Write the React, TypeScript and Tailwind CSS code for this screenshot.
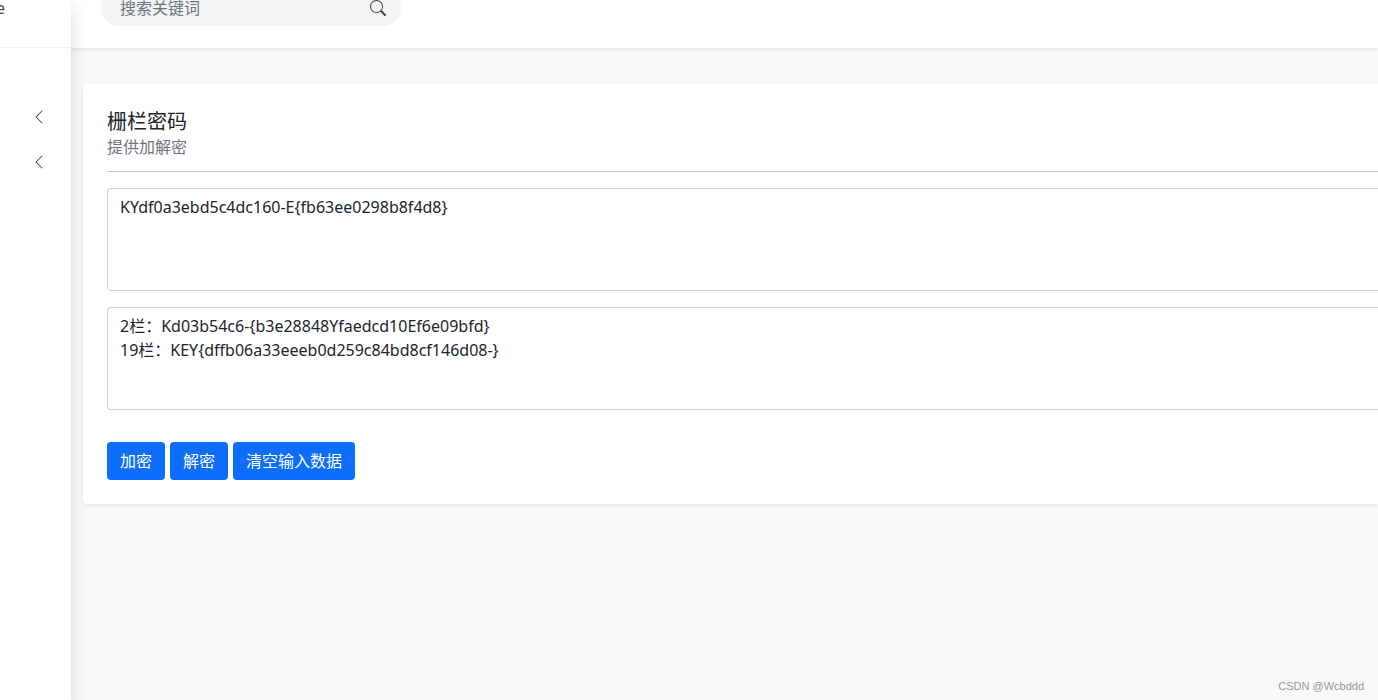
import { useState } from "react";
import { BsChevronLeft, BsSearch } from "react-icons/bs";

const menuGroups = ["menu-1", "menu-2"];

function Sidebar() {
    return (
        <aside className="relative w-[71px] shrink-0 bg-white shadow-[0_8px_16px_rgba(0,0,0,0.15)]">
            <div className="flex h-12 w-full items-start border-b border-[#f0f0f0]">
                <span className="-ml-1 -mt-1 leading-6 text-[#444444]">e</span>
            </div>
            <nav className="flex flex-col items-center pt-[46px]">
                {menuGroups.map((group) =>
                    <button key={group} type="button" aria-label={group} className="flex h-[45px] w-full items-center pl-[31px]">
                        <BsChevronLeft className="size-4 text-[#444444]" />
                    </button>
                )}
            </nav>
        </aside>
    );
}

function TopBar() {
    const [keyword, setKeyword] = useState("");

    return (
        <header className="flex h-12 items-start bg-white pl-[30px] shadow-[0_2px_4px_rgba(0,0,0,0.075)]">
            <form className="-mt-2.5 flex h-9 w-[300px] items-center rounded-full bg-[#f4f4f4] pl-[19px] pr-[15px]" onSubmit={(e) => e.preventDefault()}>
                <input
                    type="text"
                    aria-label="搜索关键词"
                    placeholder="搜索关键词"
                    value={keyword}
                    onChange={(e) => setKeyword(e.target.value)}
                    className="min-w-0 flex-1 bg-transparent text-base outline-none placeholder:text-[#6c757d]"
                />
                <button type="submit" aria-label="search">
                    <BsSearch className="size-4 text-[#444444]" />
                </button>
            </form>
        </header>
    );
}

const areaClass = "block h-[103px] w-full resize-none rounded-l border border-r-0 border-[#d0d1d3] bg-white px-3 py-1.5 text-base leading-6 outline-none";
const buttonClass = "h-[38px] rounded bg-[#0d6efd] px-[13px] text-base text-white hover:bg-[#0b5ed7]";

function FenceCipher() {
    const [source, setSource] = useState("KYdf0a3ebd5c4dc160-E{fb63ee0298b8f4d8}");
    const [result, setResult] = useState("2栏：Kd03b54c6-{b3e28848Yfaedcd10Ef6e09bfd}\n19栏：KEY{dffb06a33eeeb0d259c84bd8cf146d08-}");

    const clear = () => {
        setSource("");
        setResult("");
    };

    return (
        <section className="relative rounded-l bg-white pt-[25px] pb-6 pl-6 shadow-[0_2px_4px_rgba(0,0,0,0.075)]">
            <h1 className="text-xl leading-[26px]">栅栏密码</h1>
            <p className="text-base leading-6 text-[#6c757d]">提供加解密</p>
            <hr className="mt-3 mb-4 border-[#c8c9ca]" />

            <div className="flex flex-col gap-4">
                <textarea aria-label="输入" className={areaClass} value={source} spellCheck={false} onChange={(e) => setSource(e.target.value)} />
                <textarea aria-label="结果" className={areaClass} value={result} spellCheck={false} onChange={(e) => setResult(e.target.value)} />
            </div>

            <div className="mt-8 flex gap-[5px]">
                <button type="button" className={buttonClass}>加密</button>
                <button type="button" className={buttonClass}>解密</button>
                <button type="button" className={buttonClass} onClick={clear}>清空输入数据</button>
            </div>
        </section>
    );
}

export default function App() {
    return (
        <div className="flex min-h-screen overflow-hidden bg-[#f8f9fb] font-['Noto_Sans','Noto_Sans_CJK_SC',sans-serif] text-base text-[#212529]">
            <Sidebar />
            <div className="flex min-w-0 flex-1 flex-col">
                <TopBar />
                <main className="flex-1 pt-9 pl-3">
                    <FenceCipher />
                </main>
                <footer className="pr-3.5 pb-1.5 text-right font-['Liberation_Sans',sans-serif] text-[11px] leading-4 text-[#999999]">CSDN @Wcbddd</footer>
            </div>
        </div>
    );
}
